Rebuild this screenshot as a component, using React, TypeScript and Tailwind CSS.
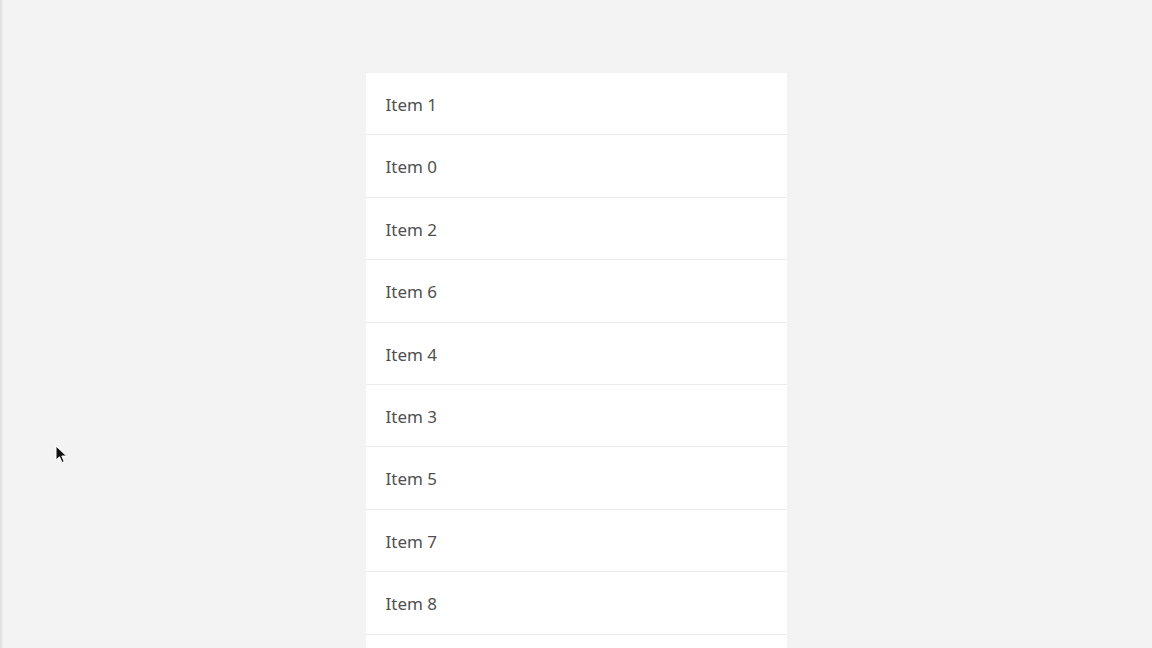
import React from 'react';

const items = [1, 0, 2, 6, 4, 3, 5, 7, 8];

const App = () => {
  return (
    <div className="relative h-[648px] w-full overflow-hidden bg-[#f3f3f3]">
      <div className="absolute left-0 top-0 h-full w-[3px] bg-gradient-to-r from-[#dcdcdc] to-[#f0f0f0]" />
      <div className="pt-[73px]">
        <ul className="mx-auto w-[421px] bg-white">
          {items.map((n) => (
            <li
              key={n}
              className="flex h-[62.4px] items-center border-b border-[#ececec] pl-[20px] pt-[2px] text-[17px] text-[#505050]"
              style={{ fontFamily: '"Noto Sans", "Open Sans", sans-serif' }}
            >
              Item {n}
            </li>
          ))}
          <li className="h-[62.4px]" />
        </ul>
      </div>
      <svg
        className="absolute left-[55px] top-[445px]"
        width="13"
        height="20"
        viewBox="0 0 13 20"
      >
        <path
          d="M1 1 L1 15 L4.5 11.8 L7 17.5 L9.2 16.6 L6.8 11 L11.5 11 Z"
          fill="#111"
          stroke="#fff"
          strokeWidth="1"
        />
      </svg>
    </div>
  );
};

export default App;
